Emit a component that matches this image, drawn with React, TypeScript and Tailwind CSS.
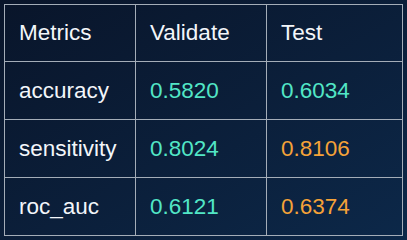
const rows = [
  { name: 'accuracy', validate: '0.5820', test: '0.6034', testWarn: false },
  { name: 'sensitivity', validate: '0.8024', test: '0.8106', testWarn: true },
  { name: 'roc_auc', validate: '0.6121', test: '0.6374', testWarn: true },
];

const cell = 'border border-[#a4adb8] pl-[14px] align-middle';

const App = () => {
  return (
    <div
      className="w-[407px] h-[240px] bg-linear-to-br from-[#09152a] to-[#0c2849] pt-[4px] pl-[4px]"
      style={{ fontFamily: '"Liberation Sans", Arial, sans-serif' }}
    >
      <table className="table-fixed border-collapse w-[398px] text-[22.5px] text-[#f3f6fa]">
        <colgroup>
          <col className="w-[131px]" />
          <col className="w-[131px]" />
          <col className="w-[136px]" />
        </colgroup>
        <thead>
          <tr className="h-[57px]">
            <th className={`${cell} text-left font-normal`}>Metrics</th>
            <th className={`${cell} text-left font-normal`}>Validate</th>
            <th className={`${cell} text-left font-normal`}>Test</th>
          </tr>
        </thead>
        <tbody>
          {rows.map((row) => (
            <tr key={row.name} className="h-[58px]">
              <td className={cell}>{row.name}</td>
              <td className={`${cell} text-[#52e6c6]`}>{row.validate}</td>
              <td
                className={`${cell} ${
                  row.testWarn ? 'text-[#f5a238]' : 'text-[#52e6c6]'
                }`}
              >
                {row.test}
              </td>
            </tr>
          ))}
        </tbody>
      </table>
    </div>
  );
};

export default App;
